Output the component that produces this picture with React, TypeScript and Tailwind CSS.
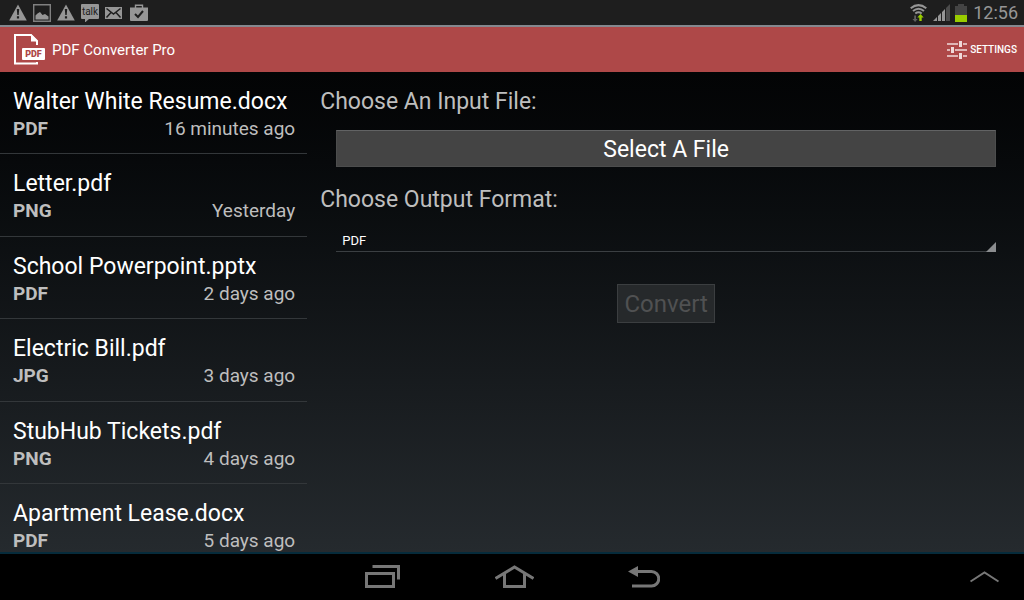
const files = [
  { name: "Walter White Resume.docx", format: "PDF", date: "16 minutes ago" },
  { name: "Letter.pdf", format: "PNG", date: "Yesterday" },
  { name: "School Powerpoint.pptx", format: "PDF", date: "2 days ago" },
  { name: "Electric Bill.pdf", format: "JPG", date: "3 days ago" },
  { name: "StubHub Tickets.pdf", format: "PNG", date: "4 days ago" },
  { name: "Apartment Lease.docx", format: "PDF", date: "5 days ago" },
];

const formats = ["PDF", "PNG", "JPG"];

function WarningIcon() {
  return (
    <svg width="18" height="17" viewBox="0 0 18 17" aria-hidden="true">
      <path d="M9 0.5 17.8 16.5H0.2z" fill="#969696" />
      <path d="M7.8 5h2.4l-.5 6H8.3zM7.9 12.3h2.2v2.2H7.9z" fill="#1e1e1e" />
    </svg>
  );
}

function StatusBar() {
  return (
    <div className="flex h-[25px] shrink-0 items-center justify-between bg-[#1e1e1e] pl-[9px] pr-[6px]">
      <div className="flex items-center gap-[6px]">
        <WarningIcon />
        <svg width="18" height="18" viewBox="0 0 18 18" aria-hidden="true">
          <path d="M0.7 0.7h16.6v16.6H0.7z" fill="none" stroke="#808080" strokeWidth="1.4" />
          <path d="M2.5 15.5v-4l2-2 2.500-1.500 2.500 3 2.500-1 3.500 2.500v3z" fill="#969696" />
        </svg>
        <WarningIcon />
        <div className="relative h-[18px] w-[18px]">
          <svg width="18" height="18" viewBox="0 0 18 18" aria-hidden="true">
            <path d="M1 0h16q1 0 1 1v13q0 1-1 1H8l-4 3.500V15H1q-1 0-1-1V1q0-1 1-1z" fill="#969696" />
          </svg>
          <span className="absolute inset-x-0 top-0 text-center text-[10px] leading-[15px] text-[#1e1e1e]">
            talk
          </span>
        </div>
        <svg width="17" height="12" viewBox="0 0 17 12" aria-hidden="true">
          <path d="M0 0h17v12H0z" fill="#969696" />
          <path
            d="M1.500 1.500 8.500 7l7-5.500M1.500 10.500 6 5.500M15.500 10.500 11 5.500"
            fill="none"
            stroke="#1e1e1e"
            strokeWidth="1.500"
          />
        </svg>
        <svg className="ml-[2px]" width="18" height="17" viewBox="0 0 18 17" aria-hidden="true">
          <path d="M5.500 4V1.200h7V4" fill="none" stroke="#969696" strokeWidth="1.400" />
          <path d="M0 3.500h18V16q0 1-1 1H1q-1 0-1-1z" fill="#969696" />
          <path d="m5 10 3 3 5-6" fill="none" stroke="#1e1e1e" strokeWidth="2" />
        </svg>
      </div>
      <div className="flex items-center">
        <svg width="17" height="18" viewBox="0 0 17 18" aria-hidden="true">
          <g fill="none" stroke="#969696" strokeWidth="2">
            <path d="M0.700 4.200Q8.500-2 16.300 4.200" />
            <path d="M3 7Q8.500 2.500 14 7" />
            <path d="M5.300 9.500Q8.500 7 11.700 9.500" />
          </g>
          <path d="M4.200 11.500h1.800V15h1.700L5.100 18l-2.600-3h1.700z" fill="#606060" />
          <path d="M9.300 17v-3.500H7.300l3.200-3.500 3.200 3.500h-2v3.500z" fill="#99cc00" />
        </svg>
        <svg className="ml-[6px]" width="17" height="17" viewBox="0 0 17 17" aria-hidden="true">
          <path d="M0 17 4 13v4zM5 12l3-3v8H5zM9 8l3-3v12H9z" fill="#969696" />
          <path d="m13 4 4-4v17h-4z" fill="#4c4c4c" />
        </svg>
        <svg className="ml-[5px]" width="12" height="18" viewBox="0 0 12 18" aria-hidden="true">
          <path d="M3 0h6v2h3v9H0V2h3z" fill="#444444" />
          <path d="M0 11h12v7H0z" fill="#99cc00" />
        </svg>
        <span className="ml-[6px] text-[18px] leading-[24px] text-[#969696]">12:56</span>
      </div>
    </div>
  );
}

function Header() {
  return (
    <header className="flex h-[47px] shrink-0 items-center justify-between border-t-2 border-[#85888f] bg-[#ae4848] pl-[14px] pr-[7px] text-white">
      <div className="flex items-center gap-[7px]">
        <div className="relative h-[31px] w-[31px]">
          <svg width="31" height="31" viewBox="0 0 31 31" aria-hidden="true">
            <path d="M23 11V7L17 1H1v28.500h22V28" fill="none" stroke="#fff" strokeWidth="2" />
            <path d="M17 0v7.500h7z" fill="#fff" />
            <rect x="8" y="14" width="23" height="12" rx="1" fill="#fff" />
          </svg>
          <span className="absolute right-0 bottom-[5px] w-[23px] text-center text-[9px] leading-[12px] font-black text-[#ae4848]">
            PDF
          </span>
        </div>
        <h1 className="text-[15px] leading-[20px]">PDF Converter Pro</h1>
      </div>
      <button className="flex items-center gap-[3px] text-[10px] leading-[16px] font-medium text-white">
        <svg width="20" height="20" viewBox="0 0 20 20" aria-hidden="true">
          <path d="M0 4h11M16 4h4M0 10h3M8 10h12M0 16h11M16 16h4" stroke="#f0dada" strokeWidth="1.500" />
          <path d="M12 1h3v6h-3zM4 7h3v6H4zM12 13h3v6h-3z" fill="#f0dada" />
        </svg>
        SETTINGS
      </button>
    </header>
  );
}

function FileList() {
  return (
    <ul className="w-[30%] min-w-[300px]">
      {files.map((file) => (
        <li
          key={file.name}
          className="h-[82px] border-b border-[#33373a] pt-[14px] pr-[12px] pl-[13px] even:h-[83px]"
        >
          <div className="pt-px text-[23px] leading-[30px] text-white">{file.name}</div>
          <div className="flex justify-between text-[19px] leading-[24px] text-[#bebebe]">
            <span className="font-bold">{file.format}</span>
            <span>{file.date}</span>
          </div>
        </li>
      ))}
    </ul>
  );
}

function ConvertForm() {
  return (
    <form className="flex flex-1 flex-col pt-[15px] pr-[28px] pl-[13px] text-[23px] leading-[30px] text-[#bebebe]">
      <label htmlFor="file">Choose An Input File:</label>
      <button
        id="file"
        type="button"
        className="mt-[13px] ml-[16px] h-[37px] border border-t-[#626364] border-[#4c4d4d] bg-[#444444] pt-[2px] text-white"
      >
        Select A File
      </button>
      <label htmlFor="format" className="mt-[18px]">
        Choose Output Format:
      </label>
      <div className="relative mt-[15px] ml-[16px] flex">
        <select
          id="format"
          className="h-[22px] w-full appearance-none border-b border-[#3b3f42] pl-[6px] text-[13px] leading-[20px] text-white"
        >
          {formats.map((format) => (
            <option key={format}>{format}</option>
          ))}
        </select>
        <svg className="pointer-events-none absolute right-0 bottom-0" width="10" height="10" aria-hidden="true">
          <path d="M10 0v10H0z" fill="#8b8d8f" />
        </svg>
      </div>
      <button
        type="button"
        disabled
        className="mt-[32px] ml-[16px] h-[39px] self-center border border-[#3b3e40] bg-[#26292b] px-[6px] text-[24px] text-[#505152]"
      >
        Convert
      </button>
    </form>
  );
}

function NavBar() {
  return (
    <nav className="grid h-[48px] shrink-0 grid-cols-[1fr_auto_1fr] items-center border-t-2 border-[#062b3b] bg-black">
      <div className="col-start-2 flex items-center gap-[94px]">
        <button aria-label="Recent apps">
          <svg width="36" height="24" viewBox="0 0 36 24" fill="none" stroke="#777777" strokeWidth="3">
            <path d="M1.500 8.500h27v13h-27zM7.500 1.500h26v13" />
          </svg>
        </button>
        <button aria-label="Home">
          <svg width="39" height="24" viewBox="0 0 39 24" fill="none" stroke="#777777" strokeWidth="3">
            <path d="M0.500 13.500 19.500 2l19 11.500M9.500 9v12.500h20V9" />
          </svg>
        </button>
        <button aria-label="Back">
          <svg width="32" height="22" viewBox="0 0 32 22">
            <path d="M9 5.500h14.500a7 7 0 0 1 0 14.500H4" fill="none" stroke="#777777" strokeWidth="3" />
            <path d="M0 5.500 10 0v11z" fill="#777777" />
          </svg>
        </button>
      </div>
      <button aria-label="Expand" className="mr-[25px] justify-self-end">
        <svg width="29" height="12" viewBox="0 0 29 12" fill="none" stroke="#777777" strokeWidth="2">
          <path d="M0.500 10.500 14.500 1.500l14 9" />
        </svg>
      </button>
    </nav>
  );
}

export default function App() {
  return (
    <div className="flex h-screen flex-col bg-black font-['Roboto',sans-serif]">
      <StatusBar />
      <Header />
      <main className="flex min-h-0 flex-1 overflow-hidden bg-linear-to-b from-[#030405] to-[#252a2e]">
        <FileList />
        <ConvertForm />
      </main>
      <NavBar />
    </div>
  );
}
